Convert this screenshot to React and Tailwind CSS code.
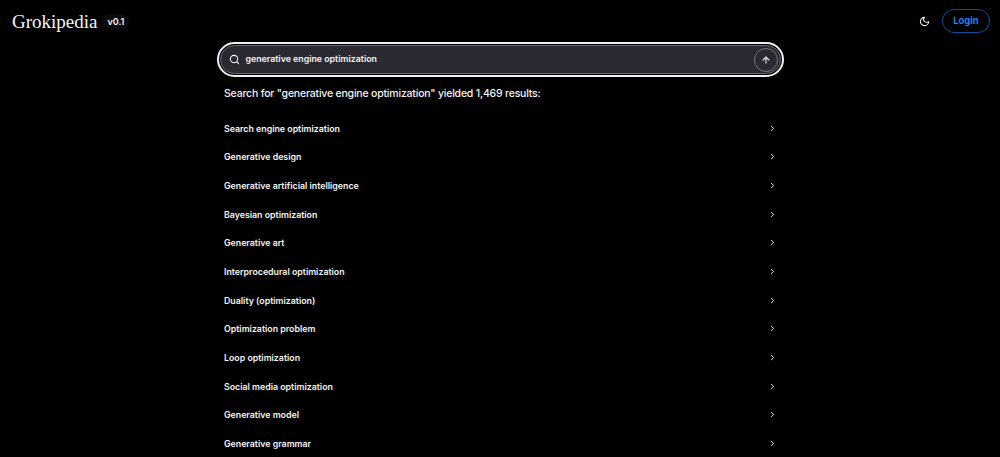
import React from "react";
import { Search, ArrowUp, ChevronRight } from "lucide-react";

const query = "generative engine optimization";

const results = [
  "Search engine optimization",
  "Generative design",
  "Generative artificial intelligence",
  "Bayesian optimization",
  "Generative art",
  "Interprocedural optimization",
  "Duality (optimization)",
  "Optimization problem",
  "Loop optimization",
  "Social media optimization",
  "Generative model",
  "Generative grammar",
];

function MoonIcon() {
  return (
    <svg
      className="size-[11px]"
      viewBox="0 0 24 24"
      fill="none"
      stroke="currentColor"
      strokeWidth="2.2"
      strokeLinecap="round"
      strokeLinejoin="round"
    >
      <path d="M12 3a6 6 0 0 0 9 9 9 9 0 1 1-9-9Z" />
    </svg>
  );
}

function Header() {
  return (
    <header className="flex h-[42px] items-center justify-between pl-3 pr-2.5">
      <div className="flex items-center gap-[5px]">
        <span className="font-['Liberation_Serif',serif] text-[19px] leading-none">Grokipedia</span>
        <span className="rounded-full bg-[#0c0c0c] px-[5px] py-[3px] text-[9px] leading-none font-semibold">v0.1</span>
      </div>
      <div className="flex items-center gap-3">
        <MoonIcon />
        <button className="flex h-6 w-12 items-center justify-center rounded-full border border-[#0d5099] text-[9.4px] leading-none font-bold text-[#1a84f0]">
          Login
        </button>
      </div>
    </header>
  );
}

function SearchBar() {
  return (
    <div className="h-[35px] w-[567px] rounded-full border-2 border-[#f0f0f0] p-px">
      <div className="flex h-full items-center rounded-full border border-[#6b6a73] bg-[#2b2a33] pl-2 pr-0.5">
        <Search size={11} strokeWidth={2.2} />
        <span className="ml-[6px] grow pb-px text-[8.8px] font-semibold">{query}</span>
        <button className="flex size-6 items-center justify-center rounded-full border border-[#74737c]">
          <ArrowUp size={10} strokeWidth={2.6} />
        </button>
      </div>
    </div>
  );
}

export default function App() {
  return (
    <div className="h-[457px] overflow-hidden bg-black font-['Inter',sans-serif] text-[#f4f4f4]">
      <Header />
      <main className="mx-auto w-[567px]">
        <SearchBar />
        <div className="pl-[7.5px] pr-[7px]">
          <h1 className="mt-[9px] h-4 text-[10.5px] leading-4 font-medium tracking-[-0.2px]">
            Search for "{query}" yielded 1,469 results:
          </h1>
          <ul className="mt-[12px]">
            {results.map((title) => (
              <li key={title} className="flex h-[28.67px] items-center justify-between">
                <span className="text-[8.8px] font-semibold">{title}</span>
                <ChevronRight size={9} strokeWidth={2.6} />
              </li>
            ))}
          </ul>
        </div>
      </main>
    </div>
  );
}
